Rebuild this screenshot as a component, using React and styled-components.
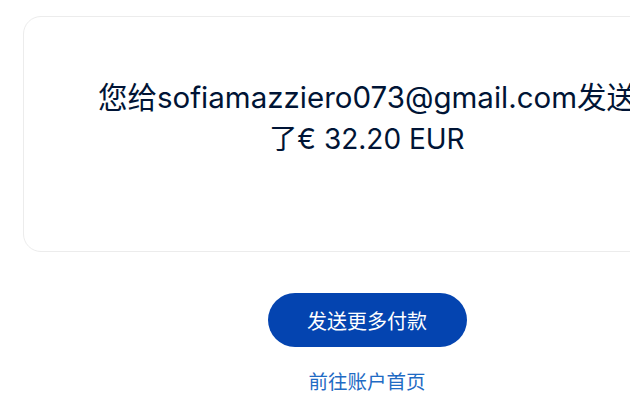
import React from "react";
import styled, { createGlobalStyle } from "styled-components";

const GlobalStyle = createGlobalStyle`
  html, body {
    margin: 0;
    padding: 0;
    background: #ffffff;
    overflow: hidden;
  }
  body {
    font-family: Inter, "Noto Sans CJK SC", sans-serif;
  }
`;

const Page = styled.main`
  width: 688px;
  margin-left: 23px;
  padding-top: 16px;
  display: flex;
  flex-direction: column;
  align-items: center;
`;

const Card = styled.section`
  box-sizing: border-box;
  width: 100%;
  height: 236px;
  border: 1px solid #ececec;
  border-radius: 18px;
  padding: 60px 20px 0;
  display: flex;
  justify-content: center;
`;

const Message = styled.h1`
  margin: 0;
  font-weight: 400;
  font-size: 29.5px;
  line-height: 41px;
  color: #001435;
  text-align: center;
  white-space: nowrap;
`;

const Amount = styled.span`
  font-size: 28px;
`;

const PrimaryButton = styled.button`
  margin-top: 41px;
  height: 54px;
  width: 199px;
  border: none;
  border-radius: 27px;
  background: #0444b0;
  color: #ffffff;
  font-family: "Noto Sans CJK SC", sans-serif;
  font-size: 20px;
  cursor: pointer;
`;

const AccountLink = styled.a`
  margin-top: 22px;
  font-family: "Noto Sans CJK SC", sans-serif;
  font-size: 19.5px;
  line-height: 24px;
  color: #1f6bc4;
  text-decoration: none;
`;

export default function App() {
  return (
    <>
      <GlobalStyle />
      <Page>
        <Card>
          <Message>
            您给sofiamazziero073@gmail.com发送
            <br />
            <Amount>了€ 32.20 EUR</Amount>
          </Message>
        </Card>
        <PrimaryButton type="button">发送更多付款</PrimaryButton>
        <AccountLink href="#">前往账户首页</AccountLink>
      </Page>
    </>
  );
}
